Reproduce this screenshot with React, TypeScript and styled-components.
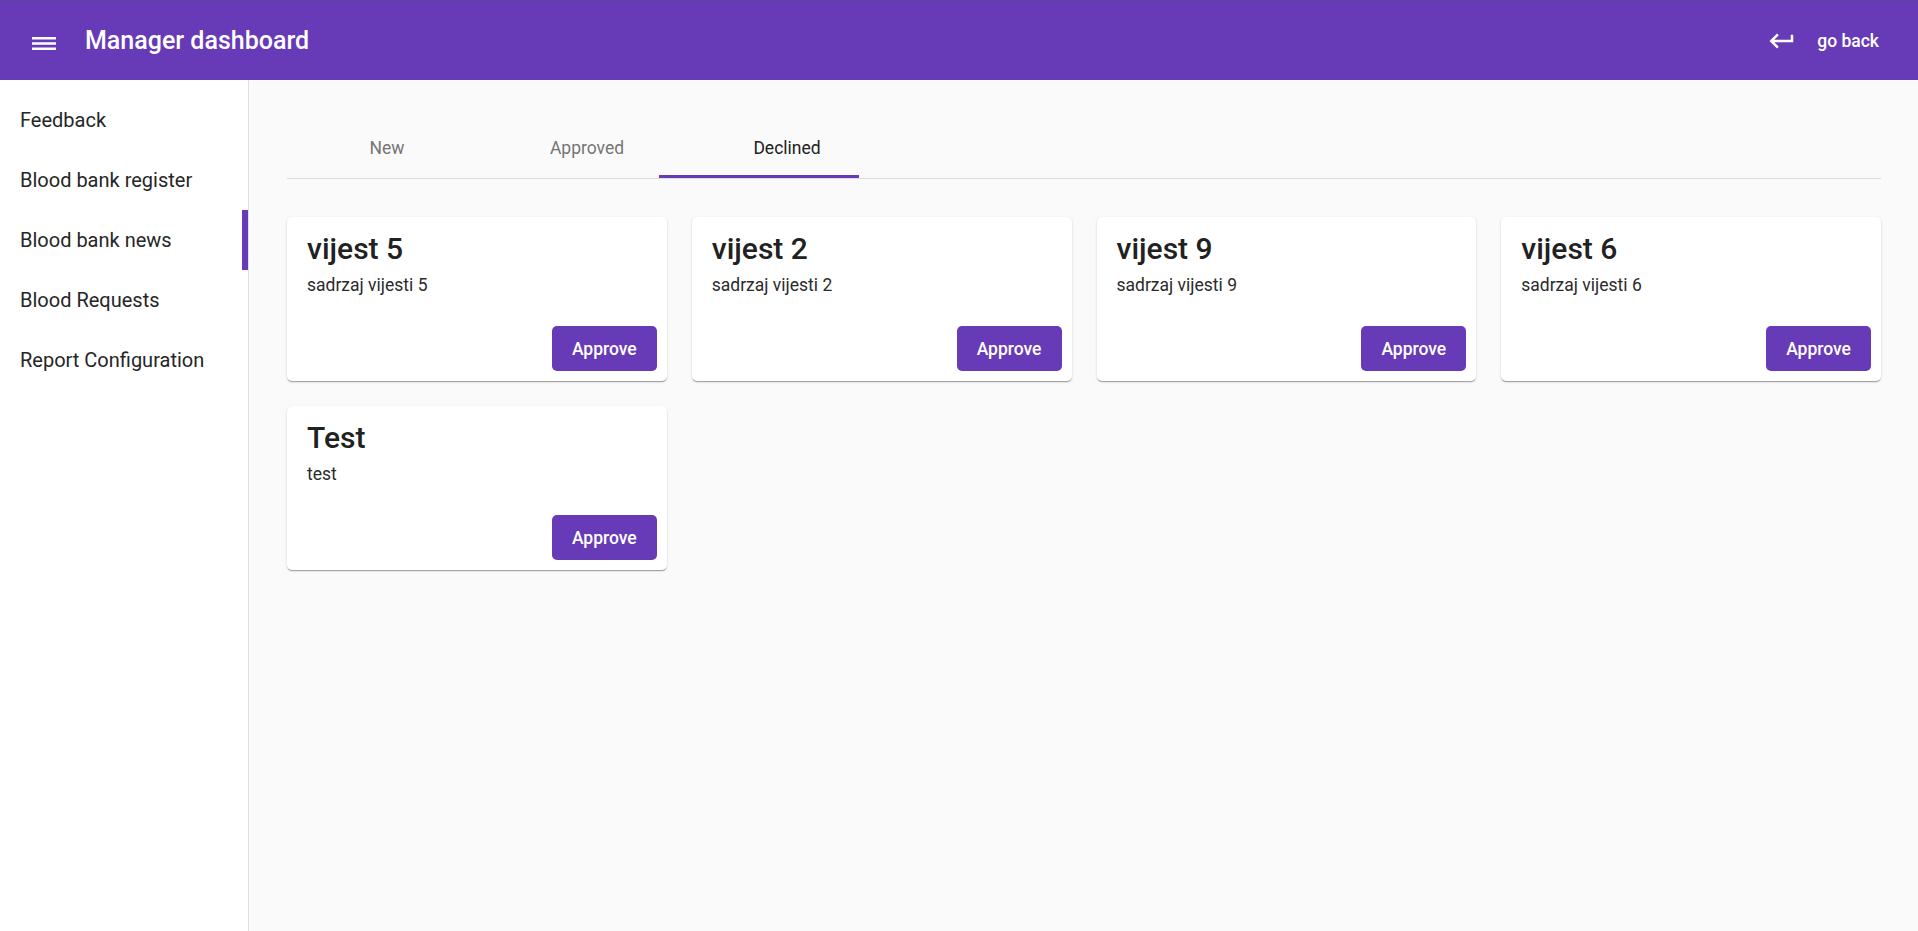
import React from "react";
import styled, { createGlobalStyle } from "styled-components";

const GlobalStyle = createGlobalStyle`
  html, body {
    margin: 0;
    padding: 0;
    height: 100%;
    font-family: Roboto, "Helvetica Neue", Arial, sans-serif;
    background: #fafafa;
  }
  #root { height: 100%; }
  * { box-sizing: border-box; }
`;

const Page = styled.div`
  display: flex;
  flex-direction: column;
  height: 100vh;
  overflow: hidden;
`;

const Toolbar = styled.header`
  flex: 0 0 80px;
  height: 80px;
  display: flex;
  align-items: center;
  background: #673ab7;
  border-top: 1px solid #5c4596;
  color: #fff;
  padding: 0 39px 0 32px;
`;

const MenuIcon = styled.svg`
  width: 24px;
  height: 13px;
  margin-top: 5px;
  flex: none;
`;

const Title = styled.h1`
  margin: 0 0 0 29px;
  font-size: 25px;
  font-weight: 500;
  line-height: 30px;
  letter-spacing: 0;
`;

const BackButton = styled.button`
  margin-left: auto;
  display: flex;
  align-items: center;
  gap: 20px;
  background: transparent;
  border: none;
  color: #fff;
  font-family: Roboto, Arial, sans-serif;
  font-size: 17.5px;
  font-weight: 500;
  padding: 0;
  cursor: pointer;
`;

const BackIcon = styled.svg`
  width: 30px;
  height: 30px;
  fill: #fff;
  flex: none;
`;

const Body = styled.div`
  flex: 1;
  display: flex;
  min-height: 0;
`;

const Sidebar = styled.nav`
  width: 249px;
  flex: none;
  background: #fff;
  border-right: 1px solid #e0e0e0;
  padding-top: 10px;
`;

const NavItem = styled.div<{ $active?: boolean }>`
  height: 60px;
  display: flex;
  align-items: center;
  padding-left: 20px;
  font-size: 20px;
  color: #262626;
  cursor: pointer;
  box-shadow: ${(p) => (p.$active ? "inset -6px 0 0 #673ab7" : "none")};
`;

const Content = styled.main`
  flex: 1;
  background: #fafafa;
  padding: 38px 37px 0 38px;
  min-width: 0;
`;

const TabBar = styled.div`
  display: flex;
  height: 61px;
  border-bottom: 1px solid #dcdcdc;
`;

const Tab = styled.div<{ $active?: boolean }>`
  position: relative;
  width: 200px;
  height: 60px;
  display: flex;
  align-items: center;
  justify-content: center;
  font-size: 17.5px;
  font-weight: 400;
  color: ${(p) => (p.$active ? "#212121" : "#757575")};
  cursor: pointer;

  &::after {
    content: "";
    display: ${(p) => (p.$active ? "block" : "none")};
    position: absolute;
    left: -28px;
    bottom: 0;
    width: 200px;
    height: 3px;
    background: #673ab7;
  }
`;

const Grid = styled.div`
  margin-top: 38px;
  display: grid;
  grid-template-columns: repeat(4, 1fr);
  gap: 25px;
`;

const Card = styled.div`
  display: flex;
  flex-direction: column;
  min-height: 164px;
  background: #fff;
  border-radius: 5px;
  box-shadow: 0 2px 1px -1px rgba(0, 0, 0, 0.2), 0 1px 1px 0 rgba(0, 0, 0, 0.14),
    0 1px 3px 0 rgba(0, 0, 0, 0.12);
`;

const CardBody = styled.div`
  padding: 17px 20px 0 20px;
`;

const CardTitle = styled.div`
  font-size: 30px;
  font-weight: 500;
  line-height: 30px;
  color: #212121;
`;

const CardText = styled.div`
  margin-top: 9px;
  font-size: 17.5px;
  line-height: 25px;
  color: #2b2b2b;
`;

const CardActions = styled.div`
  margin-top: auto;
  display: flex;
  justify-content: flex-end;
  padding: 10px;
`;

const ApproveButton = styled.button`
  height: 45px;
  padding: 0 20px;
  border: none;
  border-radius: 5px;
  background: #673ab7;
  color: #fff;
  font-family: Roboto, Arial, sans-serif;
  font-size: 17.5px;
  font-weight: 500;
  cursor: pointer;
`;

const navItems = [
  "Feedback",
  "Blood bank register",
  "Blood bank news",
  "Blood Requests",
  "Report Configuration",
];

const tabs = ["New", "Approved", "Declined"];

const news = [
  { title: "vijest 5", text: "sadrzaj vijesti 5" },
  { title: "vijest 2", text: "sadrzaj vijesti 2" },
  { title: "vijest 9", text: "sadrzaj vijesti 9" },
  { title: "vijest 6", text: "sadrzaj vijesti 6" },
  { title: "Test", text: "test" },
];

export default function App() {
  return (
    <Page>
      <GlobalStyle />
      <Toolbar>
        <MenuIcon viewBox="0 0 24 13">
          <rect x="0" y="0" width="24" height="2.5" fill="#fff" />
          <rect x="0" y="5.25" width="24" height="2.5" fill="#fff" />
          <rect x="0" y="10.5" width="24" height="2.5" fill="#fff" />
        </MenuIcon>
        <Title>Manager dashboard</Title>
        <BackButton>
          <BackIcon viewBox="0 0 24 24">
            <path d="M19 7v4H5.83l3.58-3.59L8 6l-6 6 6 6 1.41-1.41L5.83 13H21V7z" />
          </BackIcon>
          go back
        </BackButton>
      </Toolbar>
      <Body>
        <Sidebar>
          {navItems.map((n) => (
            <NavItem key={n} $active={n === "Blood bank news"}>
              {n}
            </NavItem>
          ))}
        </Sidebar>
        <Content>
          <TabBar>
            {tabs.map((t) => (
              <Tab key={t} $active={t === "Declined"}>
                {t}
              </Tab>
            ))}
          </TabBar>
          <Grid>
            {news.map((n) => (
              <Card key={n.title}>
                <CardBody>
                  <CardTitle>{n.title}</CardTitle>
                  <CardText>{n.text}</CardText>
                </CardBody>
                <CardActions>
                  <ApproveButton>Approve</ApproveButton>
                </CardActions>
              </Card>
            ))}
          </Grid>
        </Content>
      </Body>
    </Page>
  );
}
